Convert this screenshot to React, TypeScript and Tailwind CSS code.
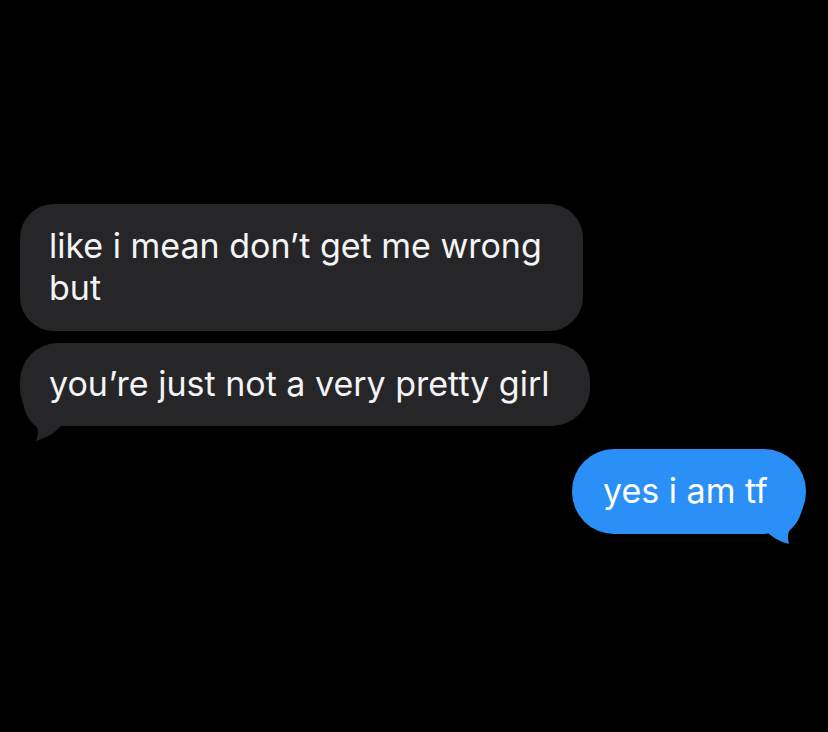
export default function App() {
  return (
    <div className="relative w-[828px] h-[732px] bg-black overflow-hidden font-['Inter','Liberation_Sans',sans-serif] text-[#f4f4f6]">
      <div className="flex flex-col pt-[204px]">
        {/* incoming messages */}
        <div className="ml-[20px] w-[563px] rounded-[34px] bg-[#262628] pl-[29px] pr-[20px] pt-[21px] pb-[22px] text-[34px] leading-[42px]">
          <div className="whitespace-nowrap">like i mean don’t get me wrong</div>
          <div>but</div>
        </div>

        <div className="relative ml-[20px] mt-[12px] w-[570px] rounded-[38px] bg-[#262628] pl-[29px] pr-[20px] pt-[20px] pb-[21px] text-[34px] leading-[42px]">
          <div className="whitespace-nowrap">you’re just not a very pretty girl</div>
          <svg className="absolute left-[0px] top-[48px]" width="50" height="52" viewBox="0 0 50 52">
            <path d="M2 0 C2 20 10 31 16 35 C19 39 18 45 16 50 C26 47 35 42 42 34 L20 20 Z" fill="#262628" />
          </svg>
        </div>

        {/* outgoing message */}
        <div className="relative self-end mr-[22px] mt-[23px] w-[234px] rounded-[42px] bg-[#2a8ff6] pl-[31px] pr-[20px] pt-[21px] pb-[22px] text-[34px] leading-[42px] text-white">
          <div className="whitespace-nowrap">yes i am tf</div>
          <svg className="absolute right-[0px] top-[45px]" width="50" height="52" viewBox="0 0 50 52">
            <path d="M48 0 C48 20 40 31 34 36 C31 40 32 46 33 50 C24 48 16 43 10 37 L30 20 Z" fill="#2a8ff6" />
          </svg>
        </div>
      </div>
    </div>
  );
}
